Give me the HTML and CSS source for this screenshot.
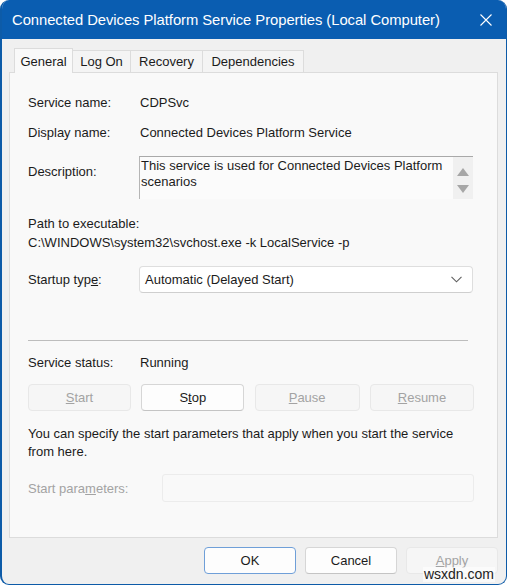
FILE: index.html
```html
<!DOCTYPE html>
<html lang="en">

<head>
    <meta charset="UTF-8">
    <meta name="viewport" content="width=device-width, initial-scale=1.0">
    <title>Connected Devices Platform Service Properties (Local Computer)</title>
    <link rel="stylesheet" href="styles.css">
</head>

<body>
    <div class="window">
        <div class="titlebar">
            <span class="title">Connected Devices Platform Service Properties (Local Computer)</span>
            <svg class="close" width="12" height="12" viewBox="0 0 12 12">
                <path d="M0.5 0.5 L11.5 11.5 M11.5 0.5 L0.5 11.5" stroke="#fff" stroke-width="1.1" fill="none" />
            </svg>
        </div>

        <div class="client">
            <div class="tabs">
                <span class="tab selected" style="width: 59px">General</span>
                <span class="tab" style="width: 58px">Log On</span>
                <span class="tab" style="width: 72px">Recovery</span>
                <span class="tab" style="width: 101px">Dependencies</span>
            </div>

            <div class="panel">
                <div class="field">
                    <span class="field-label">Service name:</span>
                    <span>CDPSvc</span>
                </div>
                <div class="field row-display">
                    <span class="field-label">Display name:</span>
                    <span>Connected Devices Platform Service</span>
                </div>
                <div class="field row-desc">
                    <span class="field-label desc-label">Description:</span>
                    <div class="desc-box">
                        <div class="desc-text">This service is used for Connected Devices Platform scenarios</div>
                        <div class="scrollbar">
                            <span class="arrow up"></span>
                            <span class="arrow down"></span>
                        </div>
                    </div>
                </div>

                <div class="path-label">Path to executable:</div>
                <div class="path-value">C:\WINDOWS\system32\svchost.exe -k LocalService -p</div>

                <div class="field row-startup">
                    <span class="field-label startup-label">Startup typ<u>e</u>:</span>
                    <div class="combo">
                        <span>Automatic (Delayed Start)</span>
                        <svg width="11" height="7" viewBox="0 0 11 7">
                            <path d="M0.5 0.8 L5.5 5.8 L10.5 0.8" stroke="#5f5f5f" stroke-width="1.1" fill="none" />
                        </svg>
                    </div>
                </div>

                <div class="separator"></div>

                <div class="field row-status">
                    <span class="field-label">Service status:</span>
                    <span>Running</span>
                </div>

                <div class="service-buttons">
                    <span class="btn disabled"><u>S</u>tart</span>
                    <span class="btn">S<u>t</u>op</span>
                    <span class="btn disabled"><u>P</u>ause</span>
                    <span class="btn disabled"><u>R</u>esume</span>
                </div>

                <p class="hint">You can specify the start parameters that apply when you start the service<br>from here.</p>

                <div class="field row-params">
                    <span class="field-label params-label">Start para<u>m</u>eters:</span>
                    <div class="params-input"></div>
                </div>
            </div>

            <div class="footer">
                <span class="btn default">OK</span>
                <span class="btn">Cancel</span>
                <span class="btn disabled"><u>A</u>pply</span>
            </div>
        </div>

        <span class="watermark">wsxdn.com</span>
    </div>
</body>

</html>
```

FILE: styles.css
```css
body {
    margin: 0;
    background: #ffffff;
    font-family: "Liberation Sans", Arial, sans-serif;
    font-size: 13px;
    color: #1b1b1b;
}

.window {
    position: relative;
    box-sizing: border-box;
    width: 507px;
    height: 585px;
    display: flex;
    flex-direction: column;
    background: #f0f0f0;
    border: 1px solid #0d5ba8;
    border-left-width: 2px;
    border-top: none;
    border-radius: 9px;
    overflow: hidden;
}

.titlebar {
    height: 39px;
    flex: none;
    display: flex;
    align-items: center;
    justify-content: space-between;
    padding: 0 14px 0 10px;
    background: #0a5db1;
    color: #ffffff;
}

.title {
    font-size: 14.8px;
    letter-spacing: -0.05px;
}

.client {
    flex: 1;
    display: flex;
    flex-direction: column;
    padding: 9px 8px 0 7px;
}

.tabs {
    display: flex;
    align-items: flex-end;
    height: 24px;
    padding-left: 5px;
}

.tab {
    box-sizing: border-box;
    height: 22px;
    line-height: 21px;
    text-align: center;
    background: #f4f4f4;
    border: 1px solid #dcdcdc;
    border-bottom: none;
    border-left: none;
}

.tab.selected {
    position: relative;
    z-index: 1;
    height: 25px;
    margin-bottom: -1px;
    line-height: 25px;
    background: #f9f9f9;
    border-left: 1px solid #dcdcdc;
}

.panel {
    box-sizing: border-box;
    height: 466px;
    flex: none;
    background: #f9f9f9;
    border: 1px solid #dcdcdc;
    padding: 22px 23px 0 18px;
}

.field {
    display: flex;
    align-items: center;
    line-height: 15px;
}

.field-label {
    width: 112px;
    flex: none;
}

.row-display {
    margin-top: 15px;
}

.row-desc {
    margin-top: 16px;
    align-items: flex-start;
}

.desc-label {
    width: 111px;
    padding-top: 8px;
}

.desc-box {
    box-sizing: border-box;
    width: 334px;
    height: 43px;
    display: flex;
    background: #fbfbfb;
    border-top: 1px solid #a9a9a9;
    border-left: 1px solid #b5b5b5;
}

.desc-text {
    flex: 1;
    padding: 1px 0 0 1px;
    line-height: 16px;
}

.scrollbar {
    width: 20px;
    display: flex;
    flex-direction: column;
    align-items: center;
    justify-content: space-between;
    padding: 11px 0 6px;
    background: #f0f0f0;
}

.arrow {
    width: 0;
    height: 0;
    border-left: 6px solid transparent;
    border-right: 6px solid transparent;
}

.arrow.up {
    border-bottom: 8px solid #a6a6a6;
}

.arrow.down {
    border-top: 8px solid #a6a6a6;
}

.path-label {
    margin-top: 17px;
    line-height: 15px;
}

.path-value {
    margin-top: 4px;
    line-height: 15px;
}

.row-startup {
    margin-top: 16px;
}

.startup-label {
    width: 111px;
}

.combo {
    box-sizing: border-box;
    width: 334px;
    height: 27px;
    display: flex;
    align-items: center;
    justify-content: space-between;
    padding: 0 10px 0 5px;
    background: #ffffff;
    border: 1px solid #dedede;
    border-bottom-color: #cfcfcf;
    border-radius: 4px;
}

.separator {
    width: 440px;
    height: 1px;
    margin-top: 47px;
    background: #bdbdbd;
}

.row-status {
    margin-top: 14px;
}

.service-buttons {
    display: grid;
    grid-template-columns: 103px 103px 105px 104px;
    justify-content: space-between;
    margin-top: 14px;
}

.btn {
    box-sizing: border-box;
    height: 27px;
    display: flex;
    align-items: center;
    justify-content: center;
    background: #fdfdfd;
    border: 1px solid #d6d6d6;
    border-bottom-color: #c4c4c4;
    border-radius: 4px;
}

.btn.disabled {
    background: #f6f6f6;
    border-color: #e8e8e8;
    color: #a3a3a3;
}

.hint {
    margin: 14px 0 0;
    line-height: 18px;
    white-space: nowrap;
}

.row-params {
    margin-top: 13px;
}

.params-label {
    width: 134px;
    color: #a3a3a3;
}

.params-input {
    box-sizing: border-box;
    flex: 1;
    height: 28px;
    background: #f9f9f9;
    border: 1px solid #ececec;
    border-radius: 3px;
}

.footer {
    display: flex;
    justify-content: flex-end;
    gap: 9px;
    padding-top: 9px;
}

.footer .btn {
    width: 92px;
}

.footer .btn.default {
    border-color: #6f9fd8;
}

.watermark {
    position: absolute;
    right: 11px;
    bottom: 2px;
    font-size: 14px;
    line-height: 15px;
    color: #222222;
    background: rgba(255, 255, 255, 0.6);
    padding: 0 1px;
}
```
